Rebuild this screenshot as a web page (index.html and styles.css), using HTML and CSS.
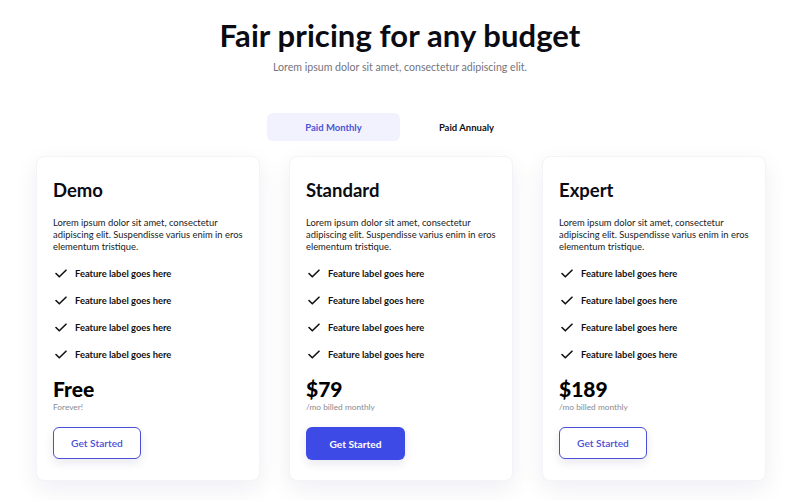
FILE: index.html
```html
<!DOCTYPE html>
<html>
<head>
<meta charset="utf-8">
<link rel="stylesheet" href="styles.css">
</head>
<body>
<div class="page">
  <header class="head">
    <h1 class="title">Fair pricing for any budget</h1>
    <p class="sub">Lorem ipsum dolor sit amet, consectetur adipiscing elit.</p>
  </header>
  <div class="toggle">
    <div class="tab active">Paid Monthly</div>
    <div class="tab">Paid Annualy</div>
  </div>
  <div class="cards">
    <div class="card">
      <h2 class="name">Demo</h2>
      <p class="desc">Lorem ipsum dolor sit amet, consectetur adipiscing elit. Suspendisse varius enim in eros elementum tristique.</p>
      <ul class="features">
        <li><svg class="chk" viewBox="0 0 12 9"><path d="M1 4.5 L4.3 7.8 L11 1.2" /></svg>Feature label goes here</li>
        <li><svg class="chk" viewBox="0 0 12 9"><path d="M1 4.5 L4.3 7.8 L11 1.2" /></svg>Feature label goes here</li>
        <li><svg class="chk" viewBox="0 0 12 9"><path d="M1 4.5 L4.3 7.8 L11 1.2" /></svg>Feature label goes here</li>
        <li><svg class="chk" viewBox="0 0 12 9"><path d="M1 4.5 L4.3 7.8 L11 1.2" /></svg>Feature label goes here</li>
      </ul>
      <div class="price">Free</div>
      <div class="period">Forever!</div>
      <button class="btn outline">Get Started</button>
    </div>
    <div class="card">
      <h2 class="name">Standard</h2>
      <p class="desc">Lorem ipsum dolor sit amet, consectetur adipiscing elit. Suspendisse varius enim in eros elementum tristique.</p>
      <ul class="features">
        <li><svg class="chk" viewBox="0 0 12 9"><path d="M1 4.5 L4.3 7.8 L11 1.2" /></svg>Feature label goes here</li>
        <li><svg class="chk" viewBox="0 0 12 9"><path d="M1 4.5 L4.3 7.8 L11 1.2" /></svg>Feature label goes here</li>
        <li><svg class="chk" viewBox="0 0 12 9"><path d="M1 4.5 L4.3 7.8 L11 1.2" /></svg>Feature label goes here</li>
        <li><svg class="chk" viewBox="0 0 12 9"><path d="M1 4.5 L4.3 7.8 L11 1.2" /></svg>Feature label goes here</li>
      </ul>
      <div class="price">$79</div>
      <div class="period">/mo billed monthly</div>
      <button class="btn filled">Get Started</button>
    </div>
    <div class="card">
      <h2 class="name">Expert</h2>
      <p class="desc">Lorem ipsum dolor sit amet, consectetur adipiscing elit. Suspendisse varius enim in eros elementum tristique.</p>
      <ul class="features">
        <li><svg class="chk" viewBox="0 0 12 9"><path d="M1 4.5 L4.3 7.8 L11 1.2" /></svg>Feature label goes here</li>
        <li><svg class="chk" viewBox="0 0 12 9"><path d="M1 4.5 L4.3 7.8 L11 1.2" /></svg>Feature label goes here</li>
        <li><svg class="chk" viewBox="0 0 12 9"><path d="M1 4.5 L4.3 7.8 L11 1.2" /></svg>Feature label goes here</li>
        <li><svg class="chk" viewBox="0 0 12 9"><path d="M1 4.5 L4.3 7.8 L11 1.2" /></svg>Feature label goes here</li>
      </ul>
      <div class="price">$189</div>
      <div class="period">/mo billed monthly</div>
      <button class="btn outline">Get Started</button>
    </div>
  </div>
</div>
</body>
</html>
```
FILE: styles.css
```css
* { box-sizing: border-box; }
html, body { margin: 0; padding: 0; background: #ffffff; }
body {
  font-family: Lato, "Noto Sans", sans-serif;
  color: #0b0b14;
  width: 800px;
  height: 500px;
  overflow: hidden;
}
.page { padding-top: 15px; }
.head { text-align: center; }
.title {
  margin: 0;
  font-size: 31px;
  line-height: 40px;
  font-weight: 700;
  letter-spacing: 0.1px;
}
.sub {
  margin: 5px 0 0;
  font-size: 10.6px;
  line-height: 14px;
  color: #74747e;
}
.toggle {
  display: flex;
  justify-content: center;
  margin-top: 39px;
}
.tab {
  width: 133px;
  height: 28px;
  display: flex;
  align-items: center;
  justify-content: center;
  font-size: 9.5px;
  font-weight: 700;
  border-radius: 6px;
  color: #111;
}
.tab.active { background: #f1f2fd; color: #4c52d4; }
.cards {
  display: flex;
  gap: 29px;
  margin-top: 15px;
  padding-left: 36px;
}
.card {
  width: 224px;
  height: 325px;
  background: #fff;
  border-radius: 8px;
  border: 1px solid #f4f4f8;
  box-shadow: 0 8px 24px rgba(30, 30, 80, 0.07);
  padding: 21px 16px 0 16px;
}
.name {
  margin: 0;
  font-size: 18.5px;
  line-height: 24px;
  font-weight: 700;
}
.desc {
  margin: 15px 0 0;
  font-size: 9.4px;
  line-height: 12px;
  color: #1a1a22;
}
.features {
  list-style: none;
  margin: 7px 0 0;
  padding: 0;
}
.features li {
  display: flex;
  align-items: center;
  height: 27px;
  font-size: 9.4px;
  font-weight: 700;
  color: #111;
}
.chk {
  width: 12px;
  height: 9px;
  margin-left: 2px;
  margin-right: 8px;
  fill: none;
  stroke: #111;
  stroke-width: 1.6;
  stroke-linecap: round;
  stroke-linejoin: round;
}
.price {
  margin-top: 9px;
  font-size: 21px;
  line-height: 24px;
  font-weight: 900;
  color: #000;
}
.period {
  font-size: 8.3px;
  line-height: 12px;
  color: #8a8a92;
}
.btn {
  display: block;
  margin-top: 14px;
  font-family: Lato, "Noto Sans", sans-serif;
  font-size: 10.2px;
  font-weight: 600;
  border-radius: 6px;
  height: 32px;
  cursor: pointer;
}
.btn.outline {
  width: 88px;
  background: #fff;
  border: 1.5px solid #4a4fd6;
  color: #4a4fd6;
  box-shadow: 0 4px 10px rgba(40, 40, 110, 0.10);
}
.btn.filled {
  width: 99px;
  height: 33px;
  background: #3e4ae6;
  border: none;
  color: #fff;
  font-weight: 700;
  box-shadow: 0 4px 10px rgba(40, 40, 110, 0.10);
}
```
